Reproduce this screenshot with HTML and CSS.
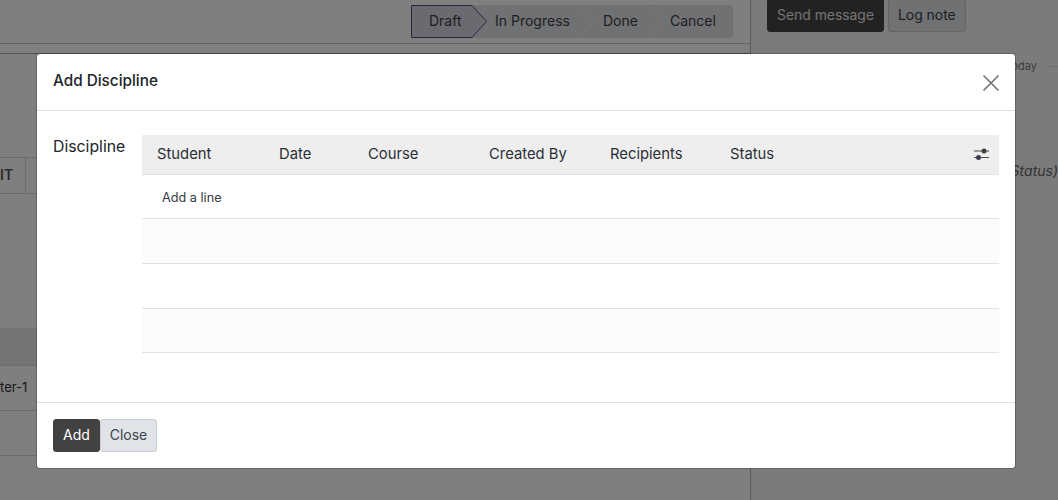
FILE: index.html
```html
<!DOCTYPE html>
<html lang="en">
<head>
<meta charset="utf-8">
<title>Add Discipline</title>
<link rel="stylesheet" href="styles.css">
</head>
<body>
<div class="page">
  <main class="form">
    <div class="statusbar">
      <div class="steps">
        <span class="step step-active">
          <svg class="step-shape" width="77" height="33" viewBox="0 0 77 33"><path d="M0.5 0.5H61L75.5 16.5L61 32.5H0.5Z" fill="#d9d5e3" stroke="#544f7c" stroke-width="1"/></svg>
          <span class="step-text">Draft</span>
        </span>
        <span class="step step-progress">In Progress</span>
        <svg class="chevron" width="15" height="33" viewBox="0 0 15 33"><path d="M0 0L14 16.5L0 33" fill="none" stroke="#f0f1f4" stroke-width="1"/></svg>
        <span class="step step-done">Done</span>
        <svg class="chevron" width="15" height="33" viewBox="0 0 15 33"><path d="M0 0L14 16.5L0 33" fill="none" stroke="#f0f1f4" stroke-width="1"/></svg>
        <span class="step step-cancel">Cancel</span>
      </div>
    </div>
    <div class="sheet">
      <div class="tab-row"><span class="tab">IT</span></div>
      <div class="bg-table-head"></div>
      <div class="bg-row"><span>ter-1</span></div>
      <div class="bg-row"></div>
    </div>
  </main>
  <aside class="chatter">
    <div class="chatter-buttons">
      <button class="chat-btn chat-primary">Send message</button>
      <button class="chat-btn chat-log">Log note</button>
    </div>
    <div class="today"><span>Today</span></div>
    <div class="tracking">Status)</div>
  </aside>
</div>
<div class="backdrop"></div>
<section class="modal">
  <header class="modal-header">
    <h4 class="modal-title">Add Discipline</h4>
    <svg class="close-icon" width="18" height="18" viewBox="0 0 18 18"><path d="M1.5 1.5l15 15M16.5 1.5l-15 15" stroke="#777" stroke-width="1.7" fill="none"/></svg>
  </header>
  <div class="modal-body">
    <label class="field-label">Discipline</label>
    <div class="list">
      <div class="list-row list-head">
        <span class="col col-student">Student</span>
        <span class="col col-date">Date</span>
        <span class="col col-course">Course</span>
        <span class="col col-created">Created By</span>
        <span class="col col-recipients">Recipients</span>
        <span class="col col-status">Status</span>
        <svg class="sliders" width="15" height="14" viewBox="0 0 15 14"><path d="M0 4h15M0 10.5h15" stroke="#4a4a4a" stroke-width="1"/><circle cx="10" cy="4" r="2.5" fill="#3c3c4c"/><circle cx="4.5" cy="10.5" r="2.5" fill="#3c3c4c"/></svg>
      </div>
      <div class="list-row list-add"><a class="add-line">Add a line</a></div>
      <div class="list-row list-empty"></div>
      <div class="list-row list-blank"></div>
      <div class="list-row list-empty"></div>
    </div>
  </div>
  <footer class="modal-footer">
    <button class="btn btn-add">Add</button><button class="btn btn-close">Close</button>
  </footer>
</section>
</body>
</html>
```
FILE: styles.css
```css
* { box-sizing: border-box; }
html, body { margin: 0; height: 100%; }
body {
  position: relative;
  width: 1058px;
  height: 500px;
  overflow: hidden;
  background: #f6f6f9;
  font-family: Inter, "Liberation Sans", sans-serif;
  font-size: 14px;
  color: #212529;
}
.page { display: flex; height: 500px; }
.form { width: 751px; flex: none; background: #fff; border-right: 1px solid #b0b2b6; }
.statusbar {
  height: 44px;
  display: flex;
  justify-content: flex-end;
  align-items: flex-start;
  padding: 5px 17px 0 0;
  border-bottom: 1px solid #c4c6cb;
  background: #fff;
}
.steps { display: flex; height: 33px; background: #e0e2e6; border-radius: 3px; }
.step { display: flex; align-items: center; font-size: 14px; line-height: 31px; padding-bottom: 2px; color: #3a3f45; position: relative; }
.step-active { width: 76px; padding-left: 18px; }
.step-shape { position: absolute; left: 0; top: 0; }
.step-text { position: relative; }
.step-progress { width: 93px; padding-left: 8px; }
.chevron { flex: none; }
.step-done { width: 52px; padding-left: 8px; }
.step-cancel { width: 71px; padding-left: 8px; }
.sheet { margin-top: 9px; border-top: 1px solid #a8a8a8; height: 447px; background: #fff; }
.tab-row { margin-top: 103px; height: 37px; border-top: 1px solid #d8d8d8; border-bottom: 1px solid #d8d8d8; display: flex; }
.tab { width: 26px; border-right: 1px solid #d8d8d8; font-weight: 600; font-size: 14px; line-height: 34px; text-align: right; padding-right: 15px; color: #555; }
.bg-table-head { margin-top: 134px; height: 38px; background: #e8e8e8; border-bottom: 1px solid #d8d8d8; }
.bg-row { height: 45px; border-bottom: 1px solid #d8d8d8; line-height: 42px; color: #333; font-size: 13px; }
.chatter { flex: 1; padding: 0 0 0 16px; min-width: 0; }
.chatter-buttons { display: flex; gap: 4px; margin-top: -2px; }
.chat-btn { height: 34px; font: inherit; font-size: 13.9px; border-radius: 3px; padding: 0 9px 1px; background: #e0e2e6; color: #3a3f45; border: 1px solid #c8cace; }
.chat-primary { background: #444; color: #e6e6e6; border-color: #444; }
.today { margin-top: 27px; margin-left: -16px; font-size: 11px; color: #777; display: flex; align-items: center; gap: 9px; }
.today::before, .today::after { content: ""; height: 1px; background: #d8d8d8; }
.today::before { flex: 1; }
.today::after { width: 12px; }
.tracking { margin-top: 89px; font-style: italic; font-size: 14px; color: #666; text-align: right; }
.backdrop { position: absolute; inset: 0; background: rgba(0, 0, 0, .5); }
.modal {
  position: absolute; left: 37px; top: 54px; width: 978px; height: 414px;
  background: #fff; border-radius: 3px;
  box-shadow: 0 0 0 1px rgba(0, 0, 0, .2);
  display: flex; flex-direction: column;
}
.modal-header {
  height: 57px; flex: none; display: flex; align-items: center; justify-content: space-between;
  padding: 0 15px 0 16px; border-bottom: 1px solid #dee2e6;
}
.modal-title { margin: 0 0 2px; font-size: 15.3px; font-weight: 500; line-height: 54px; color: #212529; }
.close-icon { margin-top: 1px; }
.modal-body { flex: 1; display: flex; padding: 24px 16px 0; }
.field-label { width: 89px; flex: none; font-size: 15.8px; line-height: 24px; color: #212529; }
.list { flex: 1; }
.list-row { display: flex; align-items: center; border-bottom: 1px solid #dee2e6; position: relative; }
.list-head { height: 40px; background: #eee; font-size: 14.8px; line-height: 36px; padding-bottom: 2px; color: #2b3036; }
.col { flex: none; padding-left: 16px; }
.col-student { width: 121px; padding-left: 15px; }
.col-date { width: 89px; }
.col-course { width: 121px; }
.col-created { width: 121px; }
.col-recipients { width: 120px; }
.col-status { width: 120px; }
.sliders { position: absolute; right: 10px; top: 12px; }
.list-add { height: 44px; padding-top: 1px; }
.add-line { padding-left: 20px; font-size: 12.7px; color: #343a40; }
.list-empty { height: 45px; background: #fcfcfc; }
.list-blank { height: 45px; }
.list-empty:last-child { height: 44px; }
.modal-footer {
  height: 66px; flex: none; display: flex; align-items: flex-start;
  padding: 16px 16px 0; border-top: 1px solid #dee2e6;
}
.btn { height: 33px; font: inherit; font-size: 14px; padding: 0 0 2px; border-radius: 3px; }
.btn-add { width: 47px; background: #424242; color: #fff; border: 1px solid #424242; }
.btn-close { width: 57px; background: #e0e3e8; color: #3e444b; border: 1px solid #ccced2; }
```
